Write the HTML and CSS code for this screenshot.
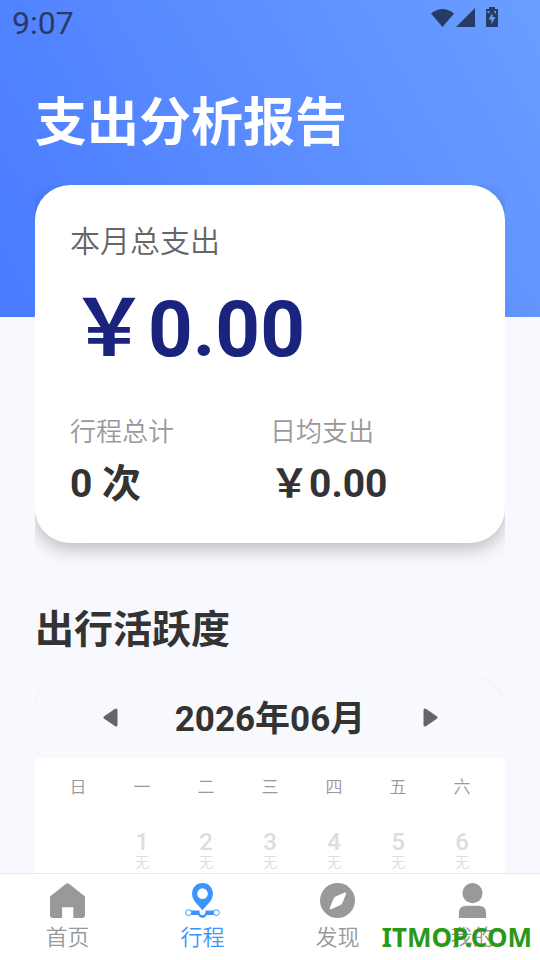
FILE: index.html
```html
<!DOCTYPE html>
<html lang="zh-CN">
<head>
<meta charset="utf-8">
<meta name="viewport" content="width=device-width, initial-scale=1">
<title>支出分析报告</title>
<link rel="stylesheet" href="styles.css">
</head>
<body>
<div class="app">
  <main class="content">
    <header class="hero">
      <div class="status">
        <span class="clock">9:07</span>
        <svg class="status-icons" viewBox="0 0 70 24" aria-hidden="true">
          <path d="M1 6.500Q12.500-2.500 24 6.500L12.500 20z"/>
          <path d="M45 1v19H26z"/>
          <path fill-rule="evenodd" d="M59 0h6v2h3v17.500q0 .5-.5.5h-11q-.5 0-.5-.5V2h3zM57.500 4v2h2V4zM64 4v1h1v1.500h1V4zM62.500 6l-4 6.500h3V17l4-7h-3z"/>
        </svg>
      </div>
      <h1 class="title">支出分析报告</h1>
    </header>
    <section class="summary">
      <p class="summary-label">本月总支出</p>
      <p class="summary-total">￥0.00</p>
      <dl class="stats">
        <div><dt>行程总计</dt><dd>0 次</dd></div>
        <div><dt>日均支出</dt><dd>￥0.00</dd></div>
      </dl>
    </section>
    <h2 class="section-title">出行活跃度</h2>
    <section class="calendar">
      <div class="calendar-head">
        <button class="arrow" type="button" aria-label="上个月"><svg viewBox="0 0 16 20" aria-hidden="true"><path d="M14 2v15L3 9.500z"/></svg></button>
        <h3 class="month">2026年06月</h3>
        <button class="arrow" type="button" aria-label="下个月"><svg viewBox="0 0 16 20" aria-hidden="true"><path d="M3 2v15L14 9.500z"/></svg></button>
      </div>
      <table class="days">
        <thead><tr><th>日</th><th>一</th><th>二</th><th>三</th><th>四</th><th>五</th><th>六</th></tr></thead>
        <tbody><tr>
          <td></td>
          <td><b>1</b><small>无</small></td>
          <td><b>2</b><small>无</small></td>
          <td><b>3</b><small>无</small></td>
          <td><b>4</b><small>无</small></td>
          <td><b>5</b><small>无</small></td>
          <td><b>6</b><small>无</small></td>
        </tr></tbody>
      </table>
    </section>
  </main>
  <nav class="tabs">
    <a class="tab" href="#home">
      <svg viewBox="0 0 36 36" aria-hidden="true"><path d="M16.500.8q1.500-1.200 3 0L36 14v19.500q0 2.500-2.500 2.500H24V25H12.500v11h-10Q0 36 0 33.500V14z"/></svg>
      <span>首页</span>
    </a>
    <a class="tab active" href="#trips" aria-current="page">
      <svg viewBox="0 0 36 36" aria-hidden="true">
        <path fill-rule="evenodd" d="M18 0C11.500 0 7.300 5 7.300 11c0 7 6 11 10.700 17C22.700 22 28.700 18 28.700 11 28.700 5 24.500 0 18 0zM18 5.500a5.500 5.500 0 1 1 0 11 5.500 5.500 0 0 1 0-11z"/>
        <path d="M5 28.200h9.800q.2 5 3.200 5t3.200-5H31V33h-8.500Q21 36 18 36t-4.500-3H5z"/>
        <circle class="stop" cx="3.700" cy="30.500" r="3"/><circle class="stop" cx="32.300" cy="30.500" r="3"/>
      </svg>
      <span>行程</span>
    </a>
    <a class="tab" href="#discover">
      <svg viewBox="0 0 36 36" aria-hidden="true"><path fill-rule="evenodd" d="M18 0a18 18 0 1 0 0 36 18 18 0 0 0 0-36zM25.500 9.700q1.700-.2 1.300 1.500L23 20.500q-.6 1.500-2 2.200L11.500 26.900q-1.800.3-1.500-1.400l4-9.500q.6-1.500 2-2.200z"/></svg>
      <span>发现</span>
    </a>
    <a class="tab" href="#mine">
      <svg viewBox="0 0 36 36" aria-hidden="true"><circle cx="18" cy="10.400" r="10.400"/><path d="M4 36v-5q0-7.500 8-7.500h12q8 0 8 7.500v5z"/></svg>
      <span>我的</span>
    </a>
    <span class="watermark">ITMOP.COM</span>
  </nav>
</div>
</body>
</html>
```
FILE: styles.css
```css
* { box-sizing: border-box; margin: 0; padding: 0; }

body {
  font-family: Roboto, "Noto Sans CJK SC", sans-serif;
  font-weight: 350;
  background: #f8f9ff;
  color: #333;
}

.app { display: flex; flex-direction: column; height: 100vh; }
.content { flex: 1; min-height: 0; overflow: hidden; }

.hero {
  padding-bottom: 156px;
  background: linear-gradient(60deg, #4a7aff, #6a9eff);
}
.status {
  display: flex;
  justify-content: space-between;
  align-items: flex-start;
  padding: 4px 40px 0 12px;
  color: #283a66;
}
.clock { font-size: 32px; line-height: 38px; font-weight: 400; }
.status-icons { width: 70px; height: 24px; margin-top: 3px; fill: #283a66; }
.title {
  padding: 44px 35px 0;
  font-size: 52px;
  line-height: 75px;
  color: #fff;
}

.summary {
  margin: -132px 35px 0;
  padding: 35px 35px 30px;
  border-radius: 35px;
  background: #fff;
  box-shadow: 0 6px 18px rgba(0, 0, 0, .25);
  clip-path: inset(0 0 -30px 0);
}
.summary-label { font-size: 30px; line-height: 44px; color: #666; }
.summary-total {
  margin-top: 10px;
  font-size: 78px;
  line-height: 112px;
  font-weight: 700;
  color: #1a237e;
}
.stats { display: grid; grid-template-columns: 1fr 1fr; margin-top: 27px; }
.stats dt { font-size: 26px; line-height: 38px; color: #999; }
.stats dd { font-size: 39px; line-height: 58px; font-weight: 700; margin-top: 4px; }

.section-title {
  margin: 58px 35px 18px;
  font-size: 39px;
  line-height: 58px;
}

.calendar {
  margin: 0 35px;
  border-radius: 32px 32px 0 0;
  box-shadow: 0 0 1px rgba(0, 0, 0, .2);
  clip-path: inset(-1px 0 0 0);
}
.calendar-head {
  display: flex;
  justify-content: space-between;
  align-items: center;
  height: 81px;
  padding: 0 67px;
  border-radius: 32px 32px 0 0;
  background: #f8f9fd;
}
.month { font-size: 35px; line-height: 52px; padding-top: 4px; }
.arrow { width: 16px; height: 20px; border: 0; background: none; }
.arrow svg {
  display: block;
  width: 16px;
  height: 20px;
  fill: #666;
  stroke: #666;
  stroke-width: 3;
  stroke-linejoin: round;
}
.days {
  width: 100%;
  padding: 16px 11px 0;
  border-spacing: 0;
  table-layout: fixed;
  background: #fff;
}
.days th { font-size: 17px; line-height: 26px; font-weight: 350; color: #999; }
.days td { padding-top: 28px; text-align: center; color: #ddd; }
.days b { display: block; font-size: 24px; line-height: 28px; font-weight: 500; }
.days small { display: block; font-size: 14px; line-height: 12px; padding-bottom: 16px; }

.tabs {
  position: relative;
  display: grid;
  grid-template-columns: repeat(4, 1fr);
  height: 87px;
  padding-top: 9px;
  border-top: 1px solid #eaeaea;
  background: #fff;
}
.tab {
  display: flex;
  flex-direction: column;
  align-items: center;
  font-size: 22px;
  line-height: 40px;
  color: #999;
  text-decoration: none;
}
.tab svg { width: 35px; height: 35px; fill: currentColor; }
.tab.active { color: #3a93ff; }
.stop { fill: #fff; stroke: currentColor; stroke-width: 1; }
.watermark {
  position: absolute;
  right: 8px;
  bottom: 5px;
  font: 700 26px/36px "Noto Sans", sans-serif;
  color: #2a9818;
}
```
